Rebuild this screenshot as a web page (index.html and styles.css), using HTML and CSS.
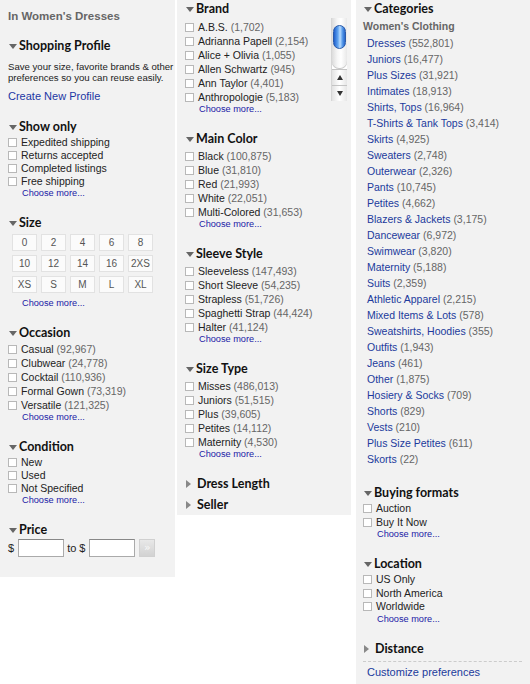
FILE: index.html
```html
<!DOCTYPE html>
<html lang="en">

<head>
  <meta charset="UTF-8" />
  <meta name="viewport" content="width=device-width, initial-scale=1.0" />
  <title>Women's Dresses - Refine</title>
  <link rel="stylesheet" href="styles.css">
</head>

<body>
  <div class="refine">

    <!-- left column: profile, show only, size, occasion, condition, price -->
    <div class="col col-left">
      <div class="context">In Women's Dresses</div>

      <div class="facet">
        <h3 class="facet-head">Shopping Profile</h3>
        <p class="profile-note">Save your size, favorite brands &amp; other<br>preferences so you can reuse easily.</p>
        <a class="profile-link" href="#">Create New Profile</a>
      </div>

      <div class="facet">
        <h3 class="facet-head">Show only</h3>
        <ul class="opts">
          <li><span class="cb"></span>Expedited shipping</li>
          <li><span class="cb"></span>Returns accepted</li>
          <li><span class="cb"></span>Completed listings</li>
          <li><span class="cb"></span>Free shipping</li>
        </ul>
        <a class="more" href="#">Choose more...</a>
      </div>

      <div class="facet">
        <h3 class="facet-head">Size</h3>
        <div class="sizes">
          <span>0</span><span>2</span><span>4</span><span>6</span><span>8</span>
          <span>10</span><span>12</span><span>14</span><span>16</span><span>2XS</span>
          <span>XS</span><span>S</span><span>M</span><span>L</span><span>XL</span>
        </div>
        <a class="more more-sizes" href="#">Choose more...</a>
      </div>

      <div class="facet">
        <h3 class="facet-head">Occasion</h3>
        <ul class="opts counted">
          <li><span class="cb"></span>Casual&nbsp;<em>(92,967)</em></li>
          <li><span class="cb"></span>Clubwear&nbsp;<em>(24,778)</em></li>
          <li><span class="cb"></span>Cocktail&nbsp;<em>(110,936)</em></li>
          <li><span class="cb"></span>Formal Gown&nbsp;<em>(73,319)</em></li>
          <li><span class="cb"></span>Versatile&nbsp;<em>(121,325)</em></li>
        </ul>
        <a class="more" href="#">Choose more...</a>
      </div>

      <div class="facet">
        <h3 class="facet-head">Condition</h3>
        <ul class="opts">
          <li><span class="cb"></span>New</li>
          <li><span class="cb"></span>Used</li>
          <li><span class="cb"></span>Not Specified</li>
        </ul>
        <a class="more" href="#">Choose more...</a>
      </div>

      <div class="facet">
        <h3 class="facet-head">Price</h3>
        <div class="price">
          <span>$</span><input type="text" class="price-in">
          <span>to $</span><input type="text" class="price-in">
          <button class="price-go">&raquo;</button>
        </div>
      </div>
    </div>

    <!-- middle column: brand, color, sleeve, size type -->
    <div class="col col-mid">
      <div class="facet">
        <h3 class="facet-head">Brand</h3>
        <div class="scroll-box">
          <ul class="opts counted">
            <li><span class="cb"></span>A.B.S.&nbsp;<em>(1,702)</em></li>
            <li><span class="cb"></span>Adrianna Papell&nbsp;<em>(2,154)</em></li>
            <li><span class="cb"></span>Alice + Olivia&nbsp;<em>(1,055)</em></li>
            <li><span class="cb"></span>Allen Schwartz&nbsp;<em>(945)</em></li>
            <li><span class="cb"></span>Ann Taylor&nbsp;<em>(4,401)</em></li>
            <li><span class="cb"></span>Anthropologie&nbsp;<em>(5,183)</em></li>
          </ul>
          <div class="sb">
            <div class="sb-track"><div class="sb-thumb"></div></div>
            <div class="sb-btn up"></div>
            <div class="sb-btn down"></div>
          </div>
        </div>
        <a class="more more-brand" href="#">Choose more...</a>
      </div>

      <div class="facet">
        <h3 class="facet-head">Main Color</h3>
        <ul class="opts counted">
          <li><span class="cb"></span>Black&nbsp;<em>(100,875)</em></li>
          <li><span class="cb"></span>Blue&nbsp;<em>(31,810)</em></li>
          <li><span class="cb"></span>Red&nbsp;<em>(21,993)</em></li>
          <li><span class="cb"></span>White&nbsp;<em>(22,051)</em></li>
          <li><span class="cb"></span>Multi-Colored&nbsp;<em>(31,653)</em></li>
        </ul>
        <a class="more" href="#">Choose more...</a>
      </div>

      <div class="facet">
        <h3 class="facet-head">Sleeve Style</h3>
        <ul class="opts counted">
          <li><span class="cb"></span>Sleeveless&nbsp;<em>(147,493)</em></li>
          <li><span class="cb"></span>Short Sleeve&nbsp;<em>(54,235)</em></li>
          <li><span class="cb"></span>Strapless&nbsp;<em>(51,726)</em></li>
          <li><span class="cb"></span>Spaghetti Strap&nbsp;<em>(44,424)</em></li>
          <li><span class="cb"></span>Halter&nbsp;<em>(41,124)</em></li>
        </ul>
        <a class="more" href="#">Choose more...</a>
      </div>

      <div class="facet">
        <h3 class="facet-head">Size Type</h3>
        <ul class="opts counted">
          <li><span class="cb"></span>Misses&nbsp;<em>(486,013)</em></li>
          <li><span class="cb"></span>Juniors&nbsp;<em>(51,515)</em></li>
          <li><span class="cb"></span>Plus&nbsp;<em>(39,605)</em></li>
          <li><span class="cb"></span>Petites&nbsp;<em>(14,112)</em></li>
          <li><span class="cb"></span>Maternity&nbsp;<em>(4,530)</em></li>
        </ul>
        <a class="more" href="#">Choose more...</a>
      </div>

      <div class="facet closed">
        <h3 class="facet-head">Dress Length</h3>
      </div>
      <div class="facet closed">
        <h3 class="facet-head">Seller</h3>
      </div>
    </div>

    <!-- right column: categories, buying formats, location -->
    <div class="col col-right">
      <div class="facet cats">
        <h3 class="facet-head">Categories</h3>
        <div class="cat-parent">Women's Clothing</div>
        <ul class="cat-list">
          <li><a href="#">Dresses</a> <em>(552,801)</em></li>
          <li><a href="#">Juniors</a> <em>(16,477)</em></li>
          <li><a href="#">Plus Sizes</a> <em>(31,921)</em></li>
          <li><a href="#">Intimates</a> <em>(18,913)</em></li>
          <li><a href="#">Shirts, Tops</a> <em>(16,964)</em></li>
          <li><a href="#">T-Shirts &amp; Tank Tops</a> <em>(3,414)</em></li>
          <li><a href="#">Skirts</a> <em>(4,925)</em></li>
          <li><a href="#">Sweaters</a> <em>(2,748)</em></li>
          <li><a href="#">Outerwear</a> <em>(2,326)</em></li>
          <li><a href="#">Pants</a> <em>(10,745)</em></li>
          <li><a href="#">Petites</a> <em>(4,662)</em></li>
          <li><a href="#">Blazers &amp; Jackets</a> <em>(3,175)</em></li>
          <li><a href="#">Dancewear</a> <em>(6,972)</em></li>
          <li><a href="#">Swimwear</a> <em>(3,820)</em></li>
          <li><a href="#">Maternity</a> <em>(5,188)</em></li>
          <li><a href="#">Suits</a> <em>(2,359)</em></li>
          <li><a href="#">Athletic Apparel</a> <em>(2,215)</em></li>
          <li><a href="#">Mixed Items &amp; Lots</a> <em>(578)</em></li>
          <li><a href="#">Sweatshirts, Hoodies</a> <em>(355)</em></li>
          <li><a href="#">Outfits</a> <em>(1,943)</em></li>
          <li><a href="#">Jeans</a> <em>(461)</em></li>
          <li><a href="#">Other</a> <em>(1,875)</em></li>
          <li><a href="#">Hosiery &amp; Socks</a> <em>(709)</em></li>
          <li><a href="#">Shorts</a> <em>(829)</em></li>
          <li><a href="#">Vests</a> <em>(210)</em></li>
          <li><a href="#">Plus Size Petites</a> <em>(611)</em></li>
          <li><a href="#">Skorts</a> <em>(22)</em></li>
        </ul>
      </div>

      <div class="facet">
        <h3 class="facet-head">Buying formats</h3>
        <ul class="opts">
          <li><span class="cb"></span>Auction</li>
          <li><span class="cb"></span>Buy It Now</li>
        </ul>
        <a class="more" href="#">Choose more...</a>
      </div>

      <div class="facet">
        <h3 class="facet-head">Location</h3>
        <ul class="opts">
          <li><span class="cb"></span>US Only</li>
          <li><span class="cb"></span>North America</li>
          <li><span class="cb"></span>Worldwide</li>
        </ul>
        <a class="more" href="#">Choose more...</a>
      </div>

      <div class="facet closed">
        <h3 class="facet-head">Distance</h3>
      </div>
      <div class="prefs">
        <a href="#">Customize preferences</a>
      </div>
    </div>

  </div>
</body>

</html>
```

FILE: styles.css
```css
body {
  margin: 0;
  background: #fff;
  font-family: 'Liberation Sans', Arial, sans-serif;
  font-size: 10.5px;
  color: #222;
}

.refine {
  display: flex;
  align-items: flex-start;
}

.col {
  background: #f2f2f2;
  box-sizing: border-box;
  padding: 0 8px;
}

.col-left {
  width: 175px;
  height: 577px;
  padding-top: 8px;
}

.col-mid {
  width: 174px;
  height: 515px;
  margin-left: 2px;
}

.col-right {
  width: 174px;
  min-height: 684px;
  margin-left: 5px;
  padding-left: 7px;
}

a {
  text-decoration: none;
}

.context {
  font-size: 11.5px;
  font-weight: bold;
  line-height: 16px;
  color: #666;
  margin-bottom: 13px;
}

/* facet blocks */
.facet {
  margin-bottom: 15px;
}

.facet.closed {
  margin-bottom: 3px;
}

.facet-head {
  display: flex;
  align-items: center;
  margin: 0;
  font-family: Lato, 'Liberation Sans', sans-serif;
  font-size: 12.5px;
  font-weight: 700;
  line-height: 18px;
  color: #111;
}

.facet-head::before {
  content: "";
  width: 0;
  height: 0;
  margin: 0 2px 0 1px;
  border-left: 4.5px solid transparent;
  border-right: 4.5px solid transparent;
  border-top: 5px solid #666;
}

.closed .facet-head::before {
  margin-right: 6px;
  border-top: 4px solid transparent;
  border-bottom: 4px solid transparent;
  border-left: 5px solid #888;
  border-right: 0;
}

.profile-note {
  margin: 6px 0 0;
  font-size: 9.6px;
  line-height: 11px;
  white-space: nowrap;
  color: #222;
}

.profile-link {
  display: block;
  margin-top: 6px;
  font-size: 11px;
  line-height: 14px;
  color: #1c37a4;
}

/* checkbox lists */
.opts {
  list-style: none;
  margin: 0;
  padding: 0;
}

.opts li {
  display: flex;
  align-items: center;
  height: 13px;
  line-height: 13px;
  white-space: nowrap;
}

.opts.counted li {
  height: 14px;
  line-height: 14px;
}

.col-right .opts li {
  height: 13.5px;
}

.col-mid .opts {
  margin-top: 1px;
}

.opts em,
.cat-list em {
  font-style: normal;
  color: #666;
}

.cb {
  flex: none;
  width: 9px;
  height: 9px;
  box-sizing: border-box;
  margin-right: 4px;
  background: #fff;
  border: 1px solid #b8b8b8;
}

.more {
  display: block;
  padding-left: 14px;
  font-size: 9.2px;
  line-height: 11px;
  color: #1a1aa6;
}

/* size chips */
.sizes {
  display: grid;
  grid-template-columns: repeat(5, 25px);
  grid-auto-rows: 17px;
  gap: 4px;
  margin: 2px 0 0 4px;
}

.sizes span {
  display: flex;
  align-items: center;
  justify-content: center;
  background: #fbfbfb;
  border: 1px solid #e2e2e2;
  font-size: 10px;
  color: #555;
}

.more-sizes {
  margin-top: 5px;
}

/* price range */
.price {
  display: flex;
  align-items: center;
  height: 18px;
  font-size: 11px;
}

.price-in {
  width: 46px;
  height: 18px;
  box-sizing: border-box;
  margin: 0 3px 0 4px;
  padding: 0;
  border: 1px solid #aaa;
  border-top-color: #888;
  background: #fff;
}

.price-in:last-of-type {
  margin-right: 4px;
}

.price-go {
  width: 16px;
  height: 18px;
  padding: 0;
  border: 1px solid #d0d0d0;
  background: linear-gradient(#e8e8e8, #d2d2d2);
  font-family: 'DejaVu Sans', sans-serif;
  font-size: 11px;
  line-height: 14px;
  color: #f8f8f8;
}

/* brand list with aqua scrollbar */
.scroll-box {
  display: flex;
  height: 85px;
  margin-right: -4px;
  overflow: hidden;
}

.scroll-box .opts {
  flex: 1;
  margin-top: 1px;
  padding-top: 1px;
}

.sb {
  flex: none;
  display: flex;
  flex-direction: column;
  width: 16px;
  height: 83px;
  background: #fff;
  border-left: 1px solid #d6d6d6;
  box-sizing: border-box;
}

.sb-track {
  flex: 1;
  border-radius: 0 0 7px 7px;
  background: linear-gradient(to right, #dcdcdc, #f6f6f6 35%, #fff 60%, #e8e8e8);
  box-shadow: inset 0 -1px 0 #c8c8c8;
}

.sb-thumb {
  height: 22px;
  margin: 7px 1px 0;
  border: 1px solid #2a5aa8;
  border-radius: 7px;
  background: linear-gradient(to right, #1f5fcc, #5fa3f0 35%, #b8dcff 55%, #4a90e6 80%, #2a66c8);
}

.sb-btn {
  flex: none;
  display: flex;
  align-items: center;
  justify-content: center;
  height: 15px;
  border-top: 1px solid #c4c4c4;
  background: linear-gradient(to right, #e2e2e2, #fff 50%, #e6e6e6);
}

.sb-btn::before {
  content: "";
  border-left: 3px solid transparent;
  border-right: 3px solid transparent;
}

.sb-btn.up::before {
  border-bottom: 5px solid #333;
}

.sb-btn.down::before {
  border-top: 5px solid #333;
}

.more-brand {
  margin-top: 1px;
}

/* categories */
.cats {
  margin-bottom: 17px;
}

.cat-parent {
  font-size: 10.5px;
  font-weight: bold;
  line-height: 16px;
  color: #666;
}

.cat-list {
  list-style: none;
  margin: 1px 0 0;
  padding: 0 0 0 4px;
}

.cat-list li {
  height: 16px;
  line-height: 16px;
  white-space: nowrap;
}

.cat-list a {
  color: #213a9c;
}

.prefs {
  margin-top: 3px;
  padding: 3px 0 0 4px;
  border-top: 1px dashed #ccc;
  line-height: 14px;
  font-size: 11px;
}

.prefs a {
  color: #213a9c;
}
```
